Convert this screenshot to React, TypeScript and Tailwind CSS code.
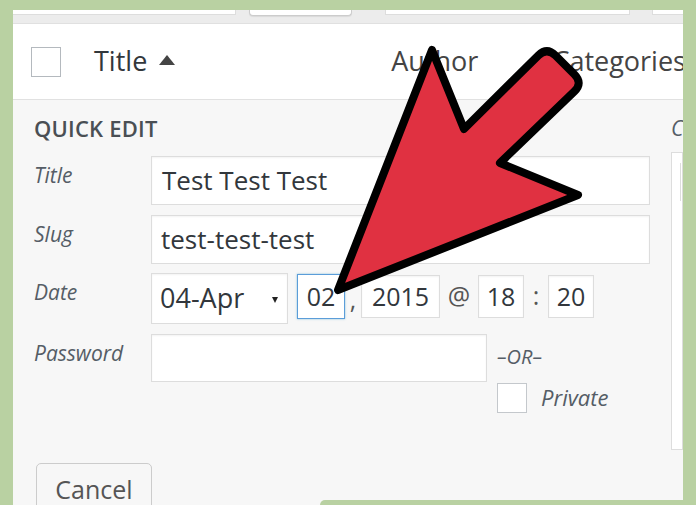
import React from 'react';

const font = "font-['Open_Sans',sans-serif]";

function Arrow() {
  // big annotation arrow laid over the screenshot
  const d =
    'M338 290 L432 50 L464 129 L538.4 55.3 Q547 47 555.5 55.5 L574.5 74.5 Q583 83 574.4 91.4 L500 163 L578 195 Z';
  return (
    <svg
      className="absolute left-0 top-0 pointer-events-none"
      width="696"
      height="505"
      viewBox="0 0 696 505"
    >
      <path d={d} fill="#e03141" stroke="#000" strokeWidth="8" strokeLinejoin="round" />
    </svg>
  );
}

function Field({ className, children }: { className: string; children?: React.ReactNode }) {
  return (
    <div
      className={`flex items-center bg-white border border-[#dddddd] text-[#32373c] shadow-[inset_0_1px_2px_rgba(0,0,0,0.05)] ${className}`}
    >
      {children}
    </div>
  );
}

export default function App() {
  return (
    <div className={`relative w-[696px] h-[505px] overflow-hidden bg-[#b9d1a2] flex items-start pt-[10px] ${font}`}>
      <div className="w-[13px] shrink-0" />
      <div className="w-[670px] min-w-0 shrink-0 h-[495px] bg-[#f7f7f7] flex flex-col overflow-hidden">
        {/* cut-off filter bar */}
        <div className="h-[14px] shrink-0 bg-[#ececec] border-b border-[#e0e0e0] flex items-start">
          <div className="w-[223px] h-[5px] bg-white border-b border-r border-[#dddddd]" />
          <div className="ml-[13px] w-[103px] h-[6px] bg-white border border-t-0 border-[#cccccc] rounded-b-[4px] shadow-[0_1px_1px_rgba(0,0,0,0.08)]" />
          <div className="ml-[33px] w-[245px] h-[5px] bg-white border-b border-x border-[#dddddd]" />
          <div className="ml-[22px] flex-1 h-[5px] bg-white border-b border-l border-[#dddddd]" />
        </div>

        {/* list table header */}
        <div className="h-[76px] shrink-0 bg-white border-b border-[#e1e1e1] flex items-center overflow-hidden text-[27px] text-[#32373c]">
          <div className="ml-[18px] shrink-0 w-[30px] h-[30px] border-[1.5px] border-[#b4b9be] bg-white" />
          <span className="ml-[33px]">Title</span>
          <span className="ml-[12px] mt-[-4px] w-0 h-0 border-l-[8px] border-r-[8px] border-b-[10px] border-l-transparent border-r-transparent border-b-[#444]" />
          <span className="ml-[216px] text-[#444]">Author</span>
          <span className="ml-[74px] text-[#444] whitespace-nowrap">Categories</span>
        </div>

        {/* quick edit */}
        <div className="flex flex-1 min-h-0">
          <div className="w-[648px] shrink-0 pl-[21px] pt-[14px]">
            <div className="h-[28px] leading-[28px] text-[22px] font-semibold text-[#4a4f54] tracking-[0.2px]">
              QUICK EDIT
            </div>

            <div className="mt-[14px] flex flex-col">
              <div className="flex">
                <div className="w-[117px] pt-[5px] text-[21px] leading-[28px] italic text-[#555d66]">Title</div>
                <Field className="w-[499px] h-[49px] pl-[10px] text-[26px]">Test Test Test</Field>
              </div>

              <div className="flex mt-[10px]">
                <div className="w-[117px] pt-[5px] text-[21px] leading-[28px] italic text-[#555d66]">Slug</div>
                <Field className="w-[499px] h-[49px] pl-[9px] text-[26px]">test-test-test</Field>
              </div>

              <div className="flex mt-[9px] items-start">
                <div className="w-[117px] pt-[5px] text-[21px] leading-[28px] italic text-[#555d66]">Date</div>
                <Field className="w-[137px] h-[51px] pl-[8px] pr-[9px] text-[27px] justify-between shadow-[0_1px_1px_rgba(0,0,0,0.06)]">
                  <span>04-Apr</span>
                  <span className="mt-[2px] w-0 h-0 border-l-[3.5px] border-r-[3.5px] border-t-[6px] border-l-transparent border-r-transparent border-t-[#222]" />
                </Field>
                <div className="ml-[9px] mt-[1px] w-[48px] h-[45px] flex items-center justify-center bg-white border-[1.5px] border-[#5b9dd9] text-[25px] text-[#32373c] shadow-[0_0_2px_rgba(30,140,190,0.5)]">
                  02
                </div>
                <span className="w-[16px] mt-[8px] text-[25px] text-[#555] text-center">,</span>
                <Field className="mt-[2px] w-[79px] h-[43px] justify-center text-[25px]">2015</Field>
                <span className="w-[38px] mt-[4px] text-[25px] text-[#555] text-center">@</span>
                <Field className="mt-[2px] w-[46px] h-[43px] justify-center text-[25px]">18</Field>
                <span className="w-[24px] mt-[4px] text-[25px] text-[#555] text-center">:</span>
                <Field className="mt-[2px] w-[46px] h-[43px] justify-center text-[25px]">20</Field>
              </div>

              <div className="flex mt-[10px] items-start">
                <div className="w-[117px] pt-[5px] text-[21px] leading-[28px] italic text-[#555d66]">Password</div>
                <Field className="w-[336px] h-[48px]" />
                <div className="ml-[10px] flex flex-col">
                  <span className="mt-[9px] h-[28px] text-[20px] leading-[28px] italic text-[#555d66]">–OR–</span>
                  <div className="mt-[10px] flex items-center">
                    <div className="w-[30px] h-[30px] bg-white border-[1.5px] border-[#c4c8cc]" />
                    <span className="ml-[14px] text-[22px] italic text-[#555d66]">Private</span>
                  </div>
                </div>
              </div>
            </div>

            <button className="mt-[49px] ml-[2px] w-[116px] h-[50px] bg-[#f7f7f7] border border-[#cccccc] rounded-[5px] text-[25px] leading-[30px] pt-[2px] text-[#555] shadow-[0_1px_0_#cccccc]">
              Cancel
            </button>
          </div>

          <div className="flex-1 min-w-0 overflow-hidden pt-[16px] pl-[10px]">
            <div className="w-[12px] overflow-hidden text-[21px] leading-[24px] italic text-[#555d66] whitespace-nowrap">Categories</div>
            <div className="mt-[12px] h-[298px] bg-white border border-[#dddddd] pl-[8px] pt-[10px]">
              <div className="w-px h-[38px] bg-[#dddddd]" />
            </div>
          </div>
        </div>
      </div>
      <div className="w-[13px] shrink-0 self-stretch bg-[#b9d1a2]" />

      <div className="absolute left-[320px] top-[500px] w-[376px] h-[5px] bg-[#b9d1a2] rounded-tl-[6px]" />
      <Arrow />
    </div>
  );
}
